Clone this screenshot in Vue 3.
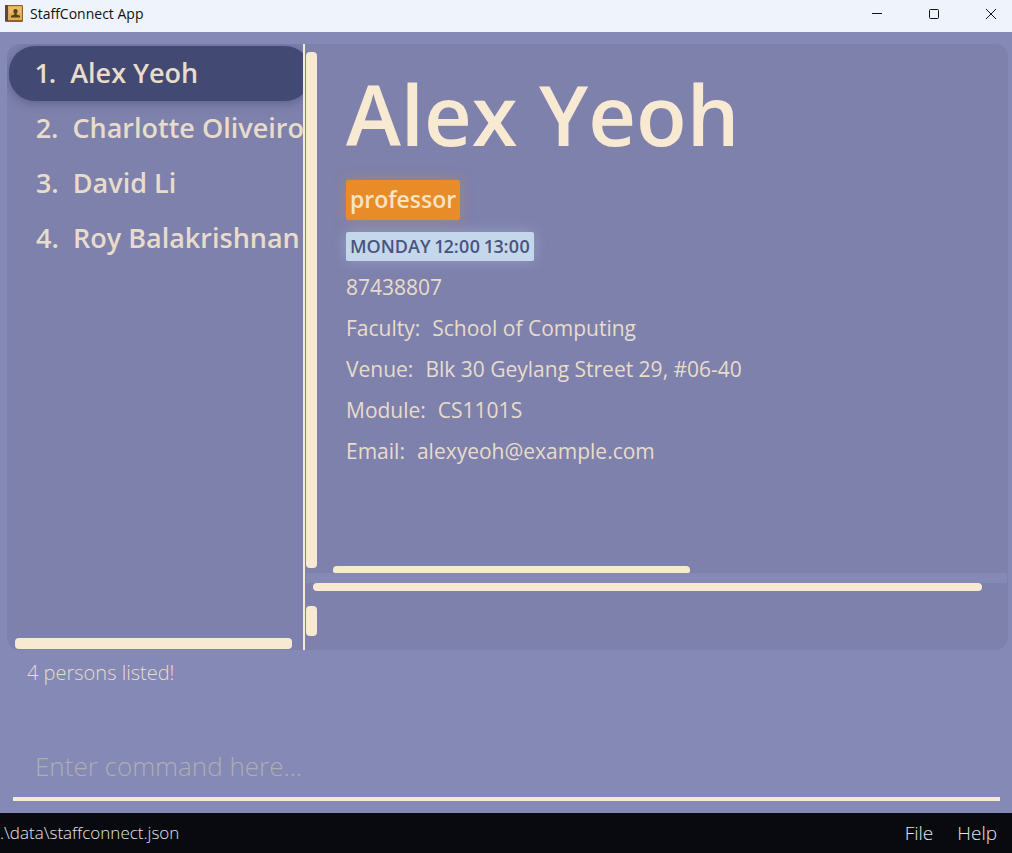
<script setup>
import { ref } from 'vue'

const persons = ['Alex Yeoh', 'Charlotte Oliveiro', 'David Li', 'Roy Balakrishnan']
const selected = ref(0)
const command = ref('')
const details = [
  ['Faculty:', 'School of Computing'],
  ['Venue:', 'Blk 30 Geylang Street 29, #06-40'],
  ['Module:', 'CS1101S'],
  ['Email:', 'alexyeoh@example.com'],
]
</script>

<template>
  <div class="window">
    <header class="titlebar">
      <svg class="app-icon" viewBox="0 0 18 17" aria-hidden="true">
        <rect x="0" y="0" width="18" height="17" rx="1" fill="#8c6428" />
        <rect x="0" y="0" width="3" height="16" fill="#5b4747" />
        <rect x="3" y="1" width="14" height="14" fill="#e0ac55" />
        <rect x="4" y="2" width="12" height="6" fill="#e9bc6c" />
        <path d="M10.500 4c1.500 0 2.200 1 2.200 2.300 0 1-.5 1.800-1.100 2.300v1l3.400 1.100V12.500H6v-1.800l3.400-1.100v-1C8.800 8.100 8.300 7.300 8.300 6.300 8.300 5 9 4 10.500 4z" fill="#54421f" />
      </svg>
      <span class="app-title">StaffConnect App</span>
      <div class="controls">
        <button type="button" aria-label="Minimize">
          <svg viewBox="0 0 12 12"><path d="M1 5.500H11" /></svg>
        </button>
        <button type="button" aria-label="Maximize">
          <svg viewBox="0 0 12 12"><rect x="1.500" y="1.500" width="9" height="9" rx="1" /></svg>
        </button>
        <button type="button" aria-label="Close">
          <svg viewBox="0 0 12 12"><path d="M1 1L11 11M11 1L1 11" /></svg>
        </button>
      </div>
    </header>

    <main class="body">
      <div class="split">
        <section class="sidebar">
          <ul class="list">
            <li v-for="(name, i) in persons" :key="name">
              <button
                type="button"
                class="person"
                :class="{ active: selected === i }"
                @click="selected = i"
              >
                <span class="num">{{ i + 1 }}.</span><span>{{ name }}</span>
              </button>
            </li>
          </ul>
          <div class="list-scroll"></div>
        </section>

        <div class="right">
          <section class="pane upper">
            <div class="vbar"></div>
            <div class="card">
              <h1>Alex Yeoh</h1>
              <span class="tag">professor</span>
              <span class="slot">MONDAY 12:00 13:00</span>
              <p>87438807</p>
              <p v-for="[label, value] in details" :key="label">
                <span class="label">{{ label }}</span><span>{{ value }}</span>
              </p>
              <div class="hbar"></div>
            </div>
          </section>
          <div class="gap"></div>
          <section class="pane lower">
            <div class="hbar-wide"></div>
            <div class="vbar-short"></div>
          </section>
        </div>
      </div>

      <p class="result" role="status">4 persons listed!</p>
      <input v-model="command" class="command" type="text" aria-label="Command" placeholder="Enter command here..." />
    </main>

    <footer class="footer">
      <span>.\data\staffconnect.json</span>
      <nav class="menu">
        <button type="button">File</button>
        <button type="button">Help</button>
      </nav>
    </footer>
  </div>
</template>

<style>
body {
  margin: 0;
}
</style>

<style scoped>
* {
  box-sizing: border-box;
}

.window {
  display: flex;
  flex-direction: column;
  min-height: 100vh;
  background: #8589b6;
  font-family: "Open Sans", "Noto Sans", sans-serif;
  color: #e8dccb;
}

button {
  padding: 0;
  border: 0;
  background: none;
  color: inherit;
  font: inherit;
}

p,
h1,
ul {
  margin: 0;
  padding: 0;
}

.titlebar {
  display: flex;
  align-items: center;
  height: 32px;
  padding: 0 4px 5px 5px;
  background: #eff3fb;
  color: #111;
}

.app-icon {
  width: 18px;
  height: 17px;
}

.app-title {
  flex: 1;
  margin-left: 7px;
  font-size: 14px;
}

.controls {
  display: flex;
  gap: 22px;
}

.controls button {
  display: flex;
  align-items: center;
  justify-content: center;
  width: 35px;
  height: 24px;
}

.controls svg {
  width: 12px;
  height: 12px;
  fill: none;
  stroke: #111;
}

.body {
  flex: 1;
  display: flex;
  flex-direction: column;
  padding: 12px 4px 12px 7px;
}

.split {
  flex: 1;
  display: flex;
  border-radius: 13px;
  background: #7e81ac;
  overflow: hidden;
}

.sidebar {
  display: flex;
  flex-direction: column;
  flex: 0 0 298px;
  border-right: 2px solid #f8ead2;
  overflow: hidden;
}

.list {
  flex: 1;
  width: 304px;
  padding: 2px 0 0 2px;
  list-style: none;
}

.person {
  display: flex;
  align-items: center;
  width: 100%;
  height: 55px;
  padding: 0 0 3px 27px;
  border-radius: 26px;
  font-size: 27px;
  font-weight: 600;
  white-space: nowrap;
}

.person.active {
  background: #424a73;
  box-shadow: 0 2px 10px rgba(66, 74, 115, 0.6);
}

.num {
  margin-right: 14px;
  font-variant-numeric: proportional-nums;
}

.list-scroll {
  height: 11px;
  margin: 0 11px 1px 8px;
  border-radius: 4px;
  background: #f8ead2;
}

.right {
  flex: 1;
  display: flex;
  flex-direction: column;
  min-width: 0;
  padding: 0 1px;
}

.upper {
  flex: 1;
  display: flex;
}

.vbar {
  width: 11px;
  margin: 8px 0 5px;
  border-radius: 4px;
  background: #f8ead2;
}

.card {
  flex: 1;
  display: flex;
  flex-direction: column;
  align-items: flex-start;
  padding: 20px 0 0 29px;
}

h1 {
  color: #f8ead2;
  font-size: 83px;
  line-height: 100px;
  font-weight: 600;
}

.tag {
  margin-top: 16px;
  padding: 0 4px 2px;
  border-radius: 2px;
  background: #e78c28;
  box-shadow: 0 0 14px rgba(231, 140, 40, 0.35);
  color: #f8e3c4;
  font-size: 23px;
  line-height: 38px;
  font-weight: 600;
}

.slot {
  margin: 12px 0 6px;
  padding: 0 4px;
  border-radius: 2px;
  background: #c5d7ea;
  box-shadow: 0 0 14px rgba(197, 215, 234, 0.35);
  color: #49547f;
  font-size: 18px;
  line-height: 29px;
  font-weight: 600;
  font-variant-numeric: proportional-nums;
}

.card p {
  font-size: 21px;
  line-height: 41px;
  white-space: nowrap;
}

.label {
  margin-right: 12px;
}

.hbar {
  width: 54%;
  height: 7px;
  margin: auto 0 0 -13px;
  border-radius: 4px 4px 2px 2px;
  background: #f8ead2;
}

.gap {
  height: 10px;
  background: #8589b6;
}

.lower {
  height: 67px;
}

.hbar-wide {
  height: 8px;
  margin: 0 25px 0 7px;
  border-radius: 4px;
  background: #f8ead2;
}

.vbar-short {
  width: 11px;
  height: 30px;
  margin-top: 15px;
  border-radius: 4px;
  background: #f8ead2;
}

.result {
  height: 86px;
  padding: 8px 20px;
  font-size: 20px;
  line-height: 30px;
  font-weight: 300;
}

.command {
  height: 65px;
  margin: 0 8px 0 6px;
  padding: 0 22px 2px;
  border: 0;
  border-bottom: 4px solid #f8ead2;
  outline: 0;
  background: transparent;
  color: #f8ead2;
  font-family: inherit;
  font-size: 26px;
  font-weight: 300;
}

.command::placeholder {
  color: #aeaeb0;
  opacity: 1;
}

.footer {
  display: flex;
  align-items: center;
  justify-content: space-between;
  height: 40px;
  padding: 0 15px 1px 0;
  background: #090a0f;
  color: #e4e4e6;
  font-size: 17px;
  font-weight: 300;
}

.menu {
  display: flex;
  gap: 24px;
  font-size: 19px;
}
</style>
